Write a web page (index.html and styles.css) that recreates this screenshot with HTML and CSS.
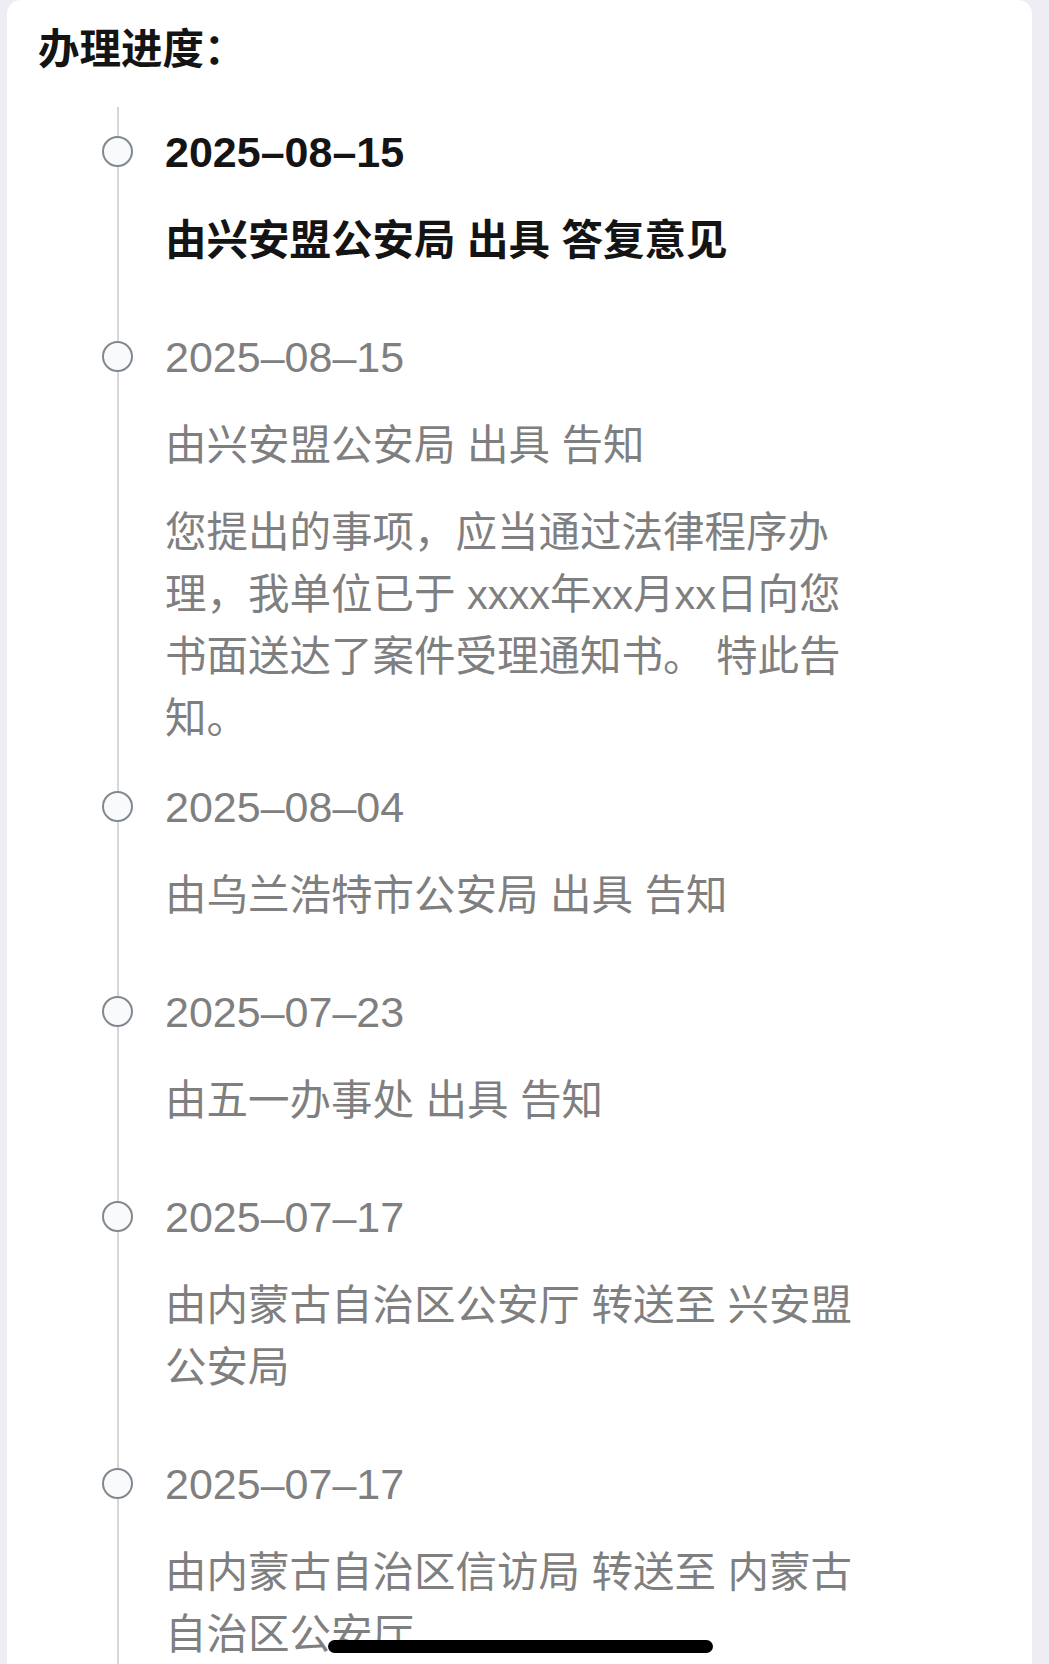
FILE: index.html
```html
<!DOCTYPE html>
<html lang="zh-CN">
<head>
<meta charset="utf-8">
<title>办理进度</title>
<link rel="stylesheet" href="styles.css">
</head>
<body>
<div class="card">
  <h2 class="section-title">办理进度：</h2>
  <div class="timeline">
    <div class="item active">
      <span class="dot"></span>
      <div class="item-date">2025–08–15</div>
      <div class="item-title">由兴安盟公安局 出具 答复意见</div>
    </div>
    <div class="item">
      <span class="dot"></span>
      <div class="item-date">2025–08–15</div>
      <div class="item-title">由兴安盟公安局 出具 告知</div>
      <div class="item-desc">您提出的事项，应当通过法律程序办理，我单位已于 xxxx年xx月xx日向您书面送达了案件受理通知书。 特此告知。</div>
    </div>
    <div class="item">
      <span class="dot"></span>
      <div class="item-date">2025–08–04</div>
      <div class="item-title">由乌兰浩特市公安局 出具 告知</div>
    </div>
    <div class="item">
      <span class="dot"></span>
      <div class="item-date">2025–07–23</div>
      <div class="item-title">由五一办事处 出具 告知</div>
    </div>
    <div class="item">
      <span class="dot"></span>
      <div class="item-date">2025–07–17</div>
      <div class="item-title">由内蒙古自治区公安厅 转送至 兴安盟公安局</div>
    </div>
    <div class="item">
      <span class="dot"></span>
      <div class="item-date">2025–07–17</div>
      <div class="item-title">由内蒙古自治区信访局 转送至 内蒙古自治区公安厅</div>
    </div>
  </div>
</div>
<div class="home-indicator"></div>
</body>
</html>
```

FILE: styles.css
```css
html, body {
  margin: 0;
  padding: 0;
}

body {
  background: #eeedf3;
  font-family: "Liberation Sans", "Noto Sans CJK SC", sans-serif;
  font-size: 41.5px;
  line-height: 62px;
  color: #7f7f7f;
  overflow: hidden;
}

.card {
  margin-left: 7px;
  width: 1025px;
  min-height: 1664px;
  background: #ffffff;
  border-radius: 14px 14px 0 0;
  padding: 19px 0 0 31px;
  box-sizing: border-box;
}

.section-title {
  margin: 0;
  font-size: 41.5px;
  line-height: 62px;
  font-weight: 700;
  color: #141414;
}

.timeline {
  margin: 26px 0 0 79px;
  padding: 14px 0 0 46px;
  border-left: 2px solid #d7d7da;
}

.item {
  position: relative;
  max-width: 697px;
  padding-bottom: 26px;
}

.dot {
  position: absolute;
  left: -63px;
  top: 15px;
  width: 31px;
  height: 31px;
  box-sizing: border-box;
  border: 2.5px solid #82888e;
  border-radius: 50%;
  background: #f8fafb;
}

.item-date {
  font-size: 43px;
}

.item-title {
  margin-top: 27px;
}

.item-title:last-child {
  margin-bottom: 28px;
}

.item-desc {
  margin-top: 25px;
}

.item.active {
  color: #141414;
  font-weight: 600;
}

.home-indicator {
  position: fixed;
  left: 328px;
  top: 1640px;
  width: 385px;
  height: 13px;
  border-radius: 7px;
  background: #000000;
}
```
